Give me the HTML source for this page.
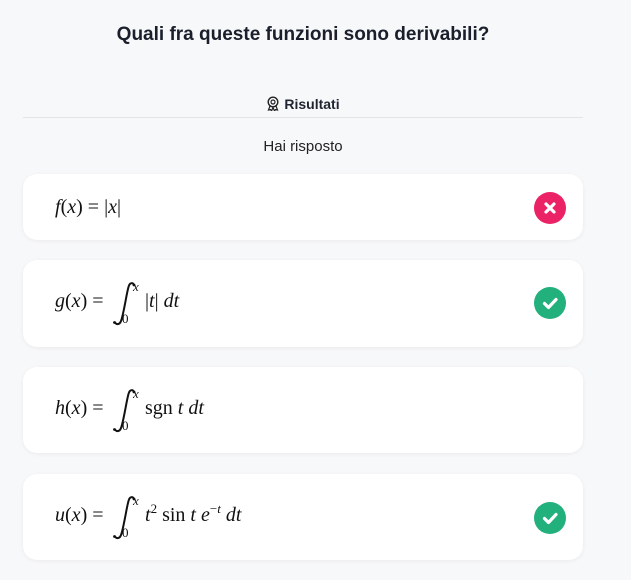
<!DOCTYPE html>
<html><head><meta charset="utf-8"><style>
*{margin:0;padding:0;box-sizing:border-box}
body{width:631px;height:580px;background:#f7f8fa;font-family:"Liberation Sans",sans-serif;color:#1f2430;position:relative;overflow:hidden}
.t{position:absolute;left:0;width:606px;text-align:center}
.card{position:absolute;left:23px;width:560px;background:#fff;border-radius:14px;box-shadow:0 1px 4px rgba(0,0,0,0.06)}
.m{position:absolute;font-family:"Liberation Serif",serif;font-size:20px;line-height:20px;color:#111;white-space:nowrap}
.m i{font-style:italic}
.s{position:absolute;font-family:"Liberation Serif",serif;font-size:13px;line-height:13px;color:#111}
.ic{position:absolute;left:511px;width:32px;height:32px;border-radius:50%}
.r{background:#eb2266}.g{background:#22b07d}
svg.in{position:absolute;left:85px;top:21px}
</style></head><body>
<div class="t" style="top:24px;font-size:19px;font-weight:bold;color:#1a1f2b">Quali fra queste funzioni sono derivabili?</div>
<div class="t" style="top:96px;font-size:14px;font-weight:bold"><svg width="14" height="15" viewBox="0 0 14 15" style="vertical-align:-2px;margin-right:4px"><circle cx="7" cy="6" r="4.8" fill="none" stroke="#222" stroke-width="1.4"/><circle cx="7" cy="6" r="2" fill="none" stroke="#222" stroke-width="1.2"/><path d="M4 10l-1.5 4 2-0.5 1 1.5L7 11.5 8.5 15l1-1.5 2 .5L10 10" fill="none" stroke="#222" stroke-width="1.2"/></svg>Risultati</div>
<div style="position:absolute;left:23px;top:117px;width:560px;height:1px;background:#e2e4e8"></div>
<div class="t" style="top:138px;font-size:15px;color:#222">Hai risposto</div>

<div class="card" style="top:174px;height:66px">
 <div class="m" style="left:32px;top:23px"><i>f</i>(<i>x</i>) = |<i>x</i>|</div>
 <div class="ic r" style="top:18px"><svg width="32" height="32"><path d="M12 12l8 8M20 12l-8 8" stroke="#fff" stroke-width="3.2" stroke-linecap="round"/></svg></div>
</div>

<div class="card" style="top:260px;height:87px">
 <div class="m" style="left:32px;top:31px"><i>g</i>(<i>x</i>) =</div>
 <svg class="in" width="30" height="46" viewBox="0 0 30 46"><path d="M26 4c-1-2.5-4-2.5-5 0.5C19 9 16 32 13 40c-1.2 3.5-4.5 4-6 1.5" fill="none" stroke="#111" stroke-width="2" stroke-linecap="round"/><circle cx="26" cy="4" r="1.4" fill="#111"/><circle cx="6.5" cy="41.5" r="1.4" fill="#111"/></svg>
 <div class="s" style="left:110px;top:20px"><i>x</i></div>
 <div class="s" style="left:99px;top:52px">0</div>
 <div class="m" style="left:122px;top:31px">|<i>t</i>| <i>dt</i></div>
 <div class="ic g" style="top:27px"><svg width="32" height="32"><path d="M10.5 16.5l4 4 7.5-8" fill="none" stroke="#fff" stroke-width="3.2" stroke-linecap="round" stroke-linejoin="round"/></svg></div>
</div>

<div class="card" style="top:367px;height:86px">
 <div class="m" style="left:32px;top:31px"><i>h</i>(<i>x</i>) =</div>
 <svg class="in" width="30" height="46" viewBox="0 0 30 46"><path d="M26 4c-1-2.5-4-2.5-5 0.5C19 9 16 32 13 40c-1.2 3.5-4.5 4-6 1.5" fill="none" stroke="#111" stroke-width="2" stroke-linecap="round"/><circle cx="26" cy="4" r="1.4" fill="#111"/><circle cx="6.5" cy="41.5" r="1.4" fill="#111"/></svg>
 <div class="s" style="left:110px;top:20px"><i>x</i></div>
 <div class="s" style="left:99px;top:52px">0</div>
 <div class="m" style="left:122px;top:31px">sgn <i>t</i> <i>dt</i></div>
</div>

<div class="card" style="top:474px;height:86px">
 <div class="m" style="left:32px;top:31px"><i>u</i>(<i>x</i>) =</div>
 <svg class="in" width="30" height="46" viewBox="0 0 30 46"><path d="M26 4c-1-2.5-4-2.5-5 0.5C19 9 16 32 13 40c-1.2 3.5-4.5 4-6 1.5" fill="none" stroke="#111" stroke-width="2" stroke-linecap="round"/><circle cx="26" cy="4" r="1.4" fill="#111"/><circle cx="6.5" cy="41.5" r="1.4" fill="#111"/></svg>
 <div class="s" style="left:110px;top:20px"><i>x</i></div>
 <div class="s" style="left:99px;top:52px">0</div>
 <div class="m" style="left:122px;top:31px"><i>t</i><span style="font-size:13px;position:relative;top:-8px">2</span> sin <i>t</i> <i>e</i><span style="font-size:13px;position:relative;top:-8px">−<i>t</i></span> <i>dt</i></div>
 <div class="ic g" style="top:28px"><svg width="32" height="32"><path d="M10.5 16.5l4 4 7.5-8" fill="none" stroke="#fff" stroke-width="3.2" stroke-linecap="round" stroke-linejoin="round"/></svg></div>
</div>
</body></html>
